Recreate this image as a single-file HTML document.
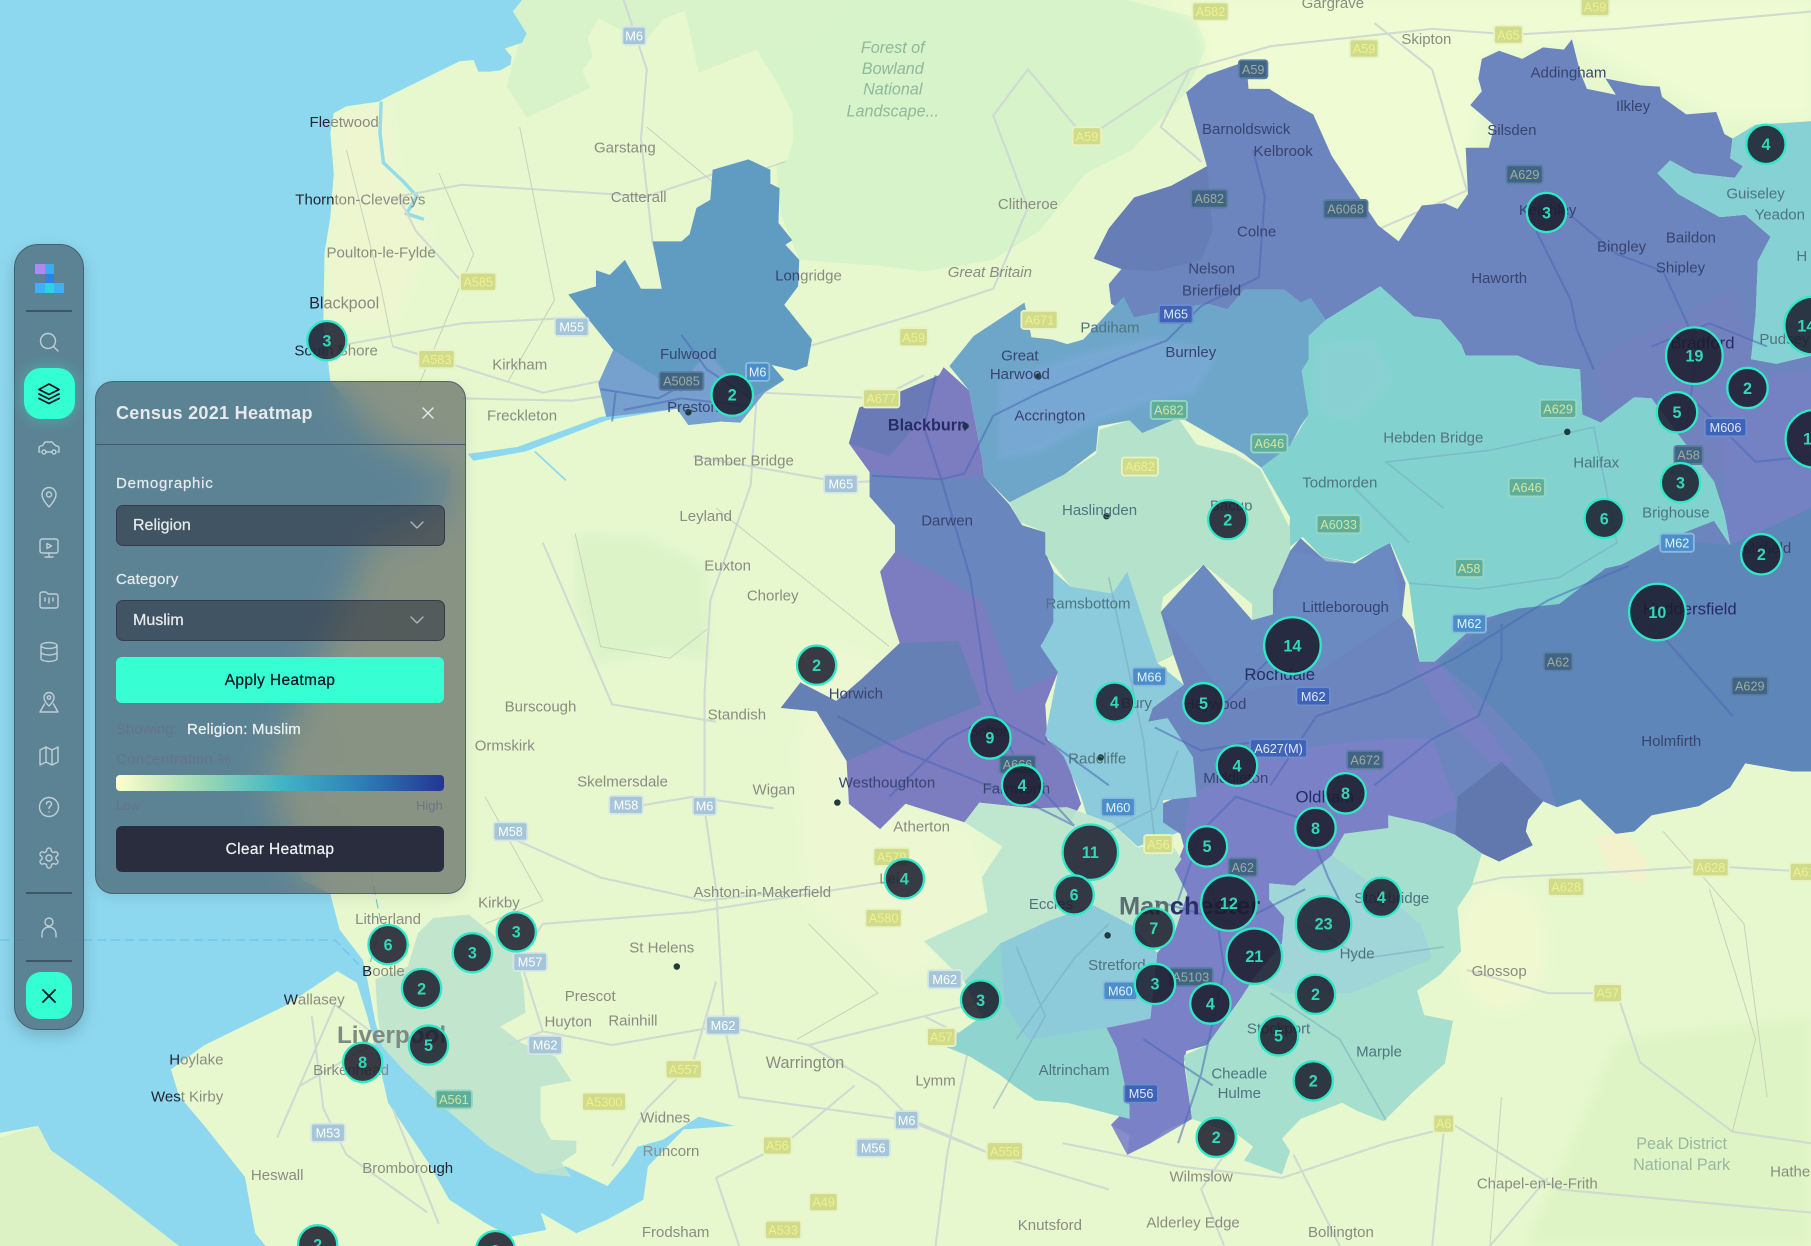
<!DOCTYPE html>
<html><head><meta charset="utf-8"><title>Census 2021 Heatmap</title>
<style>
html,body{margin:0;padding:0;width:1811px;height:1246px;overflow:hidden;background:#e7f8cf;font-family:"Liberation Sans",sans-serif}
#map{position:absolute;left:0;top:0;width:1811px;height:1246px}
#map text{font-family:"Liberation Sans",sans-serif}
.l text,text.l{font-size:13px;fill:#8a8c82;text-anchor:middle}
.h text{font-size:13px;fill:#38446f;text-anchor:middle}
.t text{font-size:13px;fill:#4f7480;text-anchor:middle}
.s rect{stroke-width:1.4;transform:scale(1.12)}
.s text{font-size:11px;text-anchor:middle;font-weight:400}
.a rect{fill:#cfdc8c;stroke:#eaf2c4}.a text{fill:#f3ef8c}
.b rect{fill:#a4c6d8;stroke:#d6e6e6}.b text{fill:#fff}
.c rect{fill:#3f6486;stroke:#5e7da0}.c text{fill:#a0ac98}
.d rect{fill:#5fae9a;stroke:#98d6c4}.d text{fill:#d0e6a0}
.e rect{fill:#4a8fcb;stroke:#8bb9dc}.e text{fill:#e4f2fa}
.f rect{fill:#3f63b8;stroke:#6c8ccc}.f text{fill:#dfe8f8}
.m circle{fill:rgba(27,28,44,.86);stroke:#2fe8c8;stroke-width:2}
.m text{fill:#35d6b8;font-size:14px;font-weight:700;text-anchor:middle}
#side{position:absolute;left:14px;top:244px;width:68px;height:784px;border-radius:24px;border:1px solid #45606f;background:rgba(42,45,58,.5);backdrop-filter:blur(16px);box-shadow:0 6px 16px rgba(0,0,0,.18)}
.dv{position:absolute;left:26px;width:46px;height:2px;background:#3f5667}
.lg{position:absolute;width:9.6px;height:9.6px}
#layers{position:absolute;left:23.5px;top:368px;width:51px;height:51px;border-radius:17px;background:#33ffd2;box-shadow:0 0 16px rgba(51,255,210,.35)}
#closeb{position:absolute;left:26px;top:972px;width:46px;height:47px;border-radius:15px;background:#33ffd2}
#panel{position:absolute;left:95px;top:381px;width:369px;height:511px;border-radius:18px;border:1px solid #4f6272;background:rgba(42,45,58,.5);backdrop-filter:blur(18px);box-shadow:0 4px 14px rgba(0,0,0,.08)}
.tx{position:absolute;white-space:nowrap;line-height:20px;color:#e6eaec;-webkit-text-stroke:.25px currentColor}
.sel{position:absolute;left:116px;width:327px;height:39px;border-radius:7px;border:1px solid #343c4b;background:rgba(42,45,58,.55)}
.btn{position:absolute;left:116px;width:328px;text-align:center;font-size:15.5px;letter-spacing:.35px;border-radius:6px}
#top{position:absolute;left:0;top:0;width:1811px;height:1246px;pointer-events:none}
#top .i{fill:none;stroke:#c0ced5;stroke-width:1.4;stroke-linecap:round;stroke-linejoin:round}
</style></head><body>
<svg id="map" viewBox="0 0 1568 1079" preserveAspectRatio="none" xmlns="http://www.w3.org/2000/svg">
<defs><filter id="bl" x="-20%" y="-20%" width="140%" height="140%"><feGaussianBlur stdDeviation="5"/></filter><filter id="bs" x="-10%" y="-10%" width="120%" height="120%"><feGaussianBlur stdDeviation="2.5"/></filter></defs>
<rect width="1568" height="1079" fill="#e7f8cf"/>
<polygon fill="#d8f2ca" points="449,0 442,9 453,26 443,58 439,75 456,102 511,76 504,61 513,49 509,32 518,16 540,27 555,40 574,17 593,9 605,63 655,43 685,49 720,17 737,14 723,0"/>
<polygon fill="#d6f3ca" points="737,14 720,17 685,49 655,43 673,72 686,98 687,121 682,138 672,142 676,185 692,225 760,230 800,235 860,225 900,200 940,150 980,130 1027,80 1045,40 1035,15 975,0 723,0"/>
<g filter="url(#bl)">
<polygon fill="#effcd3" points="1045,40 1035,15 1000,0 1568,0 1568,100 1490,100 1360,35 1283,51 1270,170 1195,210 1100,80 1045,60"/>
<polygon fill="#dcf3c8" points="498,462 560,465 612,490 614,571 570,565 515,575 498,520"/>
<polygon fill="#edf8d3" points="720,560 770,575 725,695 840,720 860,800 780,850 700,780 690,650"/>
<ellipse cx="1300" cy="820" rx="40" ry="55" fill="#f0f8d0"/>
<polygon fill="#dff4c4" points="1320,1079 1400,900 1568,880 1568,1079"/>
<polygon fill="#eef6d0" points="295,100 335,92 345,160 372,200 340,280 285,277"/>
</g>
<polygon fill="#f4f2cd" points="1380,725 1405,720 1425,745 1425,765 1395,755"/>
<polygon fill="#dcf2c4" points="0,985 33,975 44,996 88,1027 155,1079 0,1079"/>
<polygon fill="#8ed8ef" points="0,0 452,0 444,10 456,29 452,37 437,42 443,49 442,56 433,61 424,62 414,62 410,52 398,53 335,84 328,88 300,92 289,98 286,115 289,150 286,188 281,219 280,277 286,330 329,381 390,407 381,450 320,468 294,537 260,606 232,675 262,762 286,774 294,805 314,831 317,843 325,885 331,906 349,926 380,955 424,993 464,1016 490,1010 526,1027 543,1007 552,993 574,987 605,967 636,975 592,978 561,1010 557,1039 526,1056 499,1068 468,1050 473,1065 442,1071 420,1059 389,1039 371,1007 336,955 327,915 318,880 309,851 292,841 247,871 216,886 177,905 148,926 155,949 177,975 212,1019 221,1068 230,1079 155,1079 88,1027 44,996 33,975 0,981"/>
<polygon fill="#8ed8ef" points="405,393 448,387 520,361 586,354 525,364 455,391 410,399"/>
<path d="M463,391 490,416" fill="none" stroke="#8ed8ef" stroke-width="1.5"/>
<path d="M330,88 329,115 332,141 349,157 361,170 352,185 367,190" fill="none" stroke="#93dcea" stroke-width="3"/>
<path d="M0,814H290L318,843M225,600 300,660M245,680 320,750 330,800 318,843" fill="none" stroke="#6cc4e8" stroke-width="1" stroke-dasharray="8 4"/>
<g fill="none" stroke="#cfdad2" stroke-width="1.8" stroke-linejoin="round">
<path d="M540,0 560,60 555,120 565,210 590,290 612,320 655,345 650,420 615,520 610,600 610,700 620,770 627,887 640,950 785,970 860,1000"/>
<path d="M400,345 495,347 530,342 600,322M600,395 730,418 790,415"/>
<path d="M440,905 470,893 530,905 626,888 700,905 800,880 880,860M470,893 450,830 470,800 600,790 790,760"/>
<path d="M290,300 400,280 500,275M400,244 360,200 345,170 400,160 560,170 620,150M340,300 380,312 470,340 520,330"/>
<path d="M660,340 760,345 800,325M700,300 800,270 860,250 890,180 860,100 890,60 940,120 1030,60 1100,40 1240,25 1310,30 1400,25 1568,10"/>
<path d="M1190,20 1240,60 1260,130 1270,165M1030,60 1005,110 1040,140"/>
<path d="M1270,165 1190,200M430,720 520,760 610,780 700,770M470,470 530,610 620,625M540,700 600,690 670,700"/>
<path d="M240,985 290,870 330,900M270,880 280,960 300,1000 370,1050M330,900 260,940M380,1060 340,960"/>
<path d="M620,850 600,920 560,960 530,1010M700,905 760,940 790,970 860,1000 960,1030M800,880 840,900 820,1000 810,1079"/>
<path d="M640,1079 620,1020 680,990 740,940M920,990 1020,1010 1110,1020 1200,990 1260,975 1350,1030 1568,1050"/>
<path d="M1060,1079 1040,1030 1060,1000M1160,1079 1120,1000M1250,980 1240,1079M1290,1079 1340,1020"/>
<path d="M1255,770 1300,760 1400,755 1480,750 1568,755M1270,840 1340,860 1400,860 1420,920 1500,980 1568,990"/>
</g>
<g fill="none" stroke="#c8d2bc" stroke-width=".9">
<path d="M300,130 330,250 340,300M380,150 410,220 360,340M450,110 480,260 440,330M620,440 720,520 770,560M1480,770 1520,900 1500,980M1300,950 1290,1079M1440,720 1510,800 1530,950M560,110 620,160 680,140M498,462 520,560 580,570 612,545M420,690 470,780 420,800M700,800 760,860 690,900"/>
</g>
<polygon fill="#bce3cd" opacity=".88" points="375,795 406,792 446,825 453,851 455,877 433,889 451,903 481,915 495,936 468,941 468,970 477,987 499,988 499,998 486,1007 495,1019 464,1016 424,993 380,955 349,926 331,906 327,880 325,848 353,837 362,808"/>
<polygon fill="#609cc1" points="617,147 648,138 667,147 667,159 675,163 674,193 686,208 680,212 692,225 691,248 679,264 703,294 699,317 689,321 668,316 679,329 662,340 641,366 624,365 596,368 586,354 525,361 518,332 531,303 492,255 516,248 516,234 528,238 541,225 555,250 573,250 565,209 590,209 597,203 603,180 615,173"/>
<polygon fill="#7da2d2" points="531,303 590,340 600,320 612,305 650,345 679,329 662,340 641,366 624,365 596,368 586,354 525,361 518,332" opacity=".75"/>
<polygon fill="#6c85bf" points="1027,80 1045,65 1079,53 1081,77 1099,77 1115,87 1137,99 1153,135 1175,168 1193,195 1211,209 1231,178 1251,176 1262,181 1271,168 1269,128 1289,128 1294,109 1273,91 1283,79 1280,68 1283,51 1298,44 1318,51 1336,41 1354,43 1361,34 1368,62 1374,77 1399,82 1390,68 1421,74 1437,75 1439,84 1460,99 1486,97 1493,116 1500,120 1498,137 1509,144 1502,154 1466,150 1446,139 1435,150 1453,168 1489,188 1511,186 1533,205 1522,226 1520,274 1516,311 1538,315 1568,308 1568,668 1551,668 1511,661 1498,682 1471,698 1430,706 1415,720 1399,722 1368,692 1348,699 1336,694 1323,710 1321,720 1327,732 1298,746 1283,739 1260,723 1233,713 1202,706 1202,717 1164,722 1153,741 1121,767 1099,765 1099,779 1112,794 1117,810 1110,817 1085,848 1074,865 1052,896 1045,905 1027,910 1025,920 1032,969 1009,979 996,990 976,1000 978,983 962,974 978,958 967,908 958,890 981,886 996,882 1002,825 1017,808 1028,774 1017,753 1025,733 1022,722 1007,713 1004,697 1026,687 1033,690 1025,656 1011,622 994,625 998,613 1025,593 1016,567 1002,574 1005,530 1042,489 1084,537 1102,532 1102,511 1117,477 1126,466 1148,486 1173,488 1203,469 1217,505 1214,533 1223,545 1229,573 1242,573 1260,557 1283,536 1314,527 1350,523 1390,492 1404,489 1448,465 1484,451 1498,472 1493,445 1484,417 1453,376 1430,345 1415,344 1386,366 1370,359 1368,320 1332,316 1314,308 1269,308 1265,298 1247,277 1224,274 1195,248 1148,277 1126,262 1112,251 1077,251 1063,268 1045,263 1007,270 982,275 962,263 960,246 971,233 947,224 960,198 982,171 1014,161 1045,144"/>
<polygon fill="#667db6" points="982,171 1014,161 1045,144 1050,200 1040,225 1000,235 971,233 947,224 960,198"/>
<polygon fill="#7680c0" opacity=".6" points="1420,290 1500,250 1518,300 1516,311 1500,400 1484,417 1453,376 1430,345 1415,344 1390,350 1380,320 1400,300"/>
<polygon fill="#7a80c6" opacity=".6" points="1490,330 1568,320 1568,460 1510,490 1498,472 1493,445"/>
<polygon fill="#5f86b8" points="1245,573 1300,530 1390,495 1450,468 1498,472 1568,440 1568,668 1551,668 1511,661 1498,682 1471,698 1430,706 1415,720 1399,722 1368,692 1348,699 1336,660 1290,610"/>
<polygon fill="#7c81c8" opacity=".9" points="1030,690 1100,650 1200,640 1240,640 1262,700 1233,713 1202,706 1202,717 1164,722 1153,741 1121,767 1099,765 1099,779 1112,794 1117,810 1085,848 1052,896 1027,910 1025,920 1032,969 996,990 976,1000 962,974 978,958 958,890 996,882 1002,825 1017,808 1028,774 1017,753 1025,733"/>
<polygon fill="#7e7fc4" opacity=".7" points="1224,575 1245,573 1310,660 1290,660 1250,620"/>
<polygon fill="#6178ae" points="1262,690 1300,660 1336,694 1323,710 1321,720 1327,732 1298,746 1283,739 1260,723"/>
<polygon fill="#6b8dc4" opacity=".6" points="1042,489 1084,537 1102,532 1117,477 1173,488 1203,469 1214,533 1130,590 1060,600 1005,530"/>
<polygon fill="#82d3d0" points="1148,277 1195,248 1224,274 1247,277 1265,298 1269,308 1314,308 1332,316 1368,320 1370,359 1386,366 1415,344 1430,345 1453,376 1484,417 1493,445 1498,472 1484,451 1448,465 1404,489 1390,492 1350,523 1314,527 1283,536 1260,557 1242,573 1229,573 1224,537 1220,506 1204,470 1171,487 1144,482 1128,465 1115,475 1117,448 1092,405 1117,386 1133,359 1127,321 1133,291"/>
<polygon fill="#8fcfd6" opacity=".6" filter="url(#bs)" points="1140,300 1190,295 1205,330 1170,365 1138,355"/>
<polygon fill="#85d1d4" points="1500,120 1498,137 1509,144 1502,154 1466,150 1446,139 1435,150 1453,168 1489,188 1511,186 1533,205 1522,226 1520,274 1516,311 1538,315 1568,308 1568,105 1520,108"/>
<polygon fill="#6ea6ca" points="822,317 843,291 887,262 893,292 911,294 924,298 938,294 960,270 973,257 982,275 1007,270 1045,263 1063,268 1077,251 1112,251 1126,262 1135,258 1148,277 1133,291 1133,311 1127,321 1133,359 1126,369 1117,386 1092,405 1077,393 1023,362 1000,376 987,376 978,364 951,369 949,390 911,419 874,435 852,413 850,396 839,338"/>
<polygon fill="#7baad7" opacity=".7" filter="url(#bs)" points="865,330 940,305 1000,292 1055,305 1035,340 990,350 950,365 900,392 865,398"/>
<polygon fill="#7c7cc0" points="817,318 839,338 850,396 852,413 874,437 885,455 905,461 907,483 919,511 910,548 901,559 916,582 905,610 907,641 923,656 936,696 927,712 894,700 848,695 835,712 784,696 762,718 735,696 733,659 707,616 676,613 693,591 724,607 746,588 779,557 771,532 762,495 775,478 775,455 753,430 753,409 735,384 744,353 775,341 813,325"/>
<polygon fill="#6a86be" points="753,430 753,409 800,415 852,413 874,437 885,455 905,461 907,483 919,511 910,548 901,559 916,582 880,600 850,520 800,490 775,478 775,455"/>
<polygon fill="#6580b4" points="779,557 830,555 850,610 800,630 733,659 707,616 676,613 693,591 724,607 746,588"/>
<polygon fill="#6a7ab6" points="744,353 775,341 813,325 800,360 770,395 735,384"/>
<polygon fill="#b5e2cb" points="874,435 923,410 949,393 952,372 978,364 989,375 1020,362 1036,385 1069,393 1091,406 1117,458 1117,477 1102,511 1102,532 1084,537 1084,523 1062,505 1042,489 1007,517 1005,530 1016,567 1002,574 976,495 963,514 927,508 905,480 905,461 883,452"/>
<polygon fill="#8bcbdc" points="912,495 927,508 963,514 976,495 1002,574 1025,593 998,613 994,625 1011,622 1033,656 1036,690 1007,693 1007,712 1020,721 985,733 963,713 941,706 936,690 921,655 905,637 916,582 901,560 912,539"/>
<polygon fill="#bde6d0" opacity=".95" points="848,695 835,712 868,733 850,760 855,790 800,815 835,850 866,817 909,797 947,784 981,802 1002,820 1017,808 1028,774 1017,753 1023,744 1014,730 985,734 963,713 924,699 894,700"/>
<polygon fill="#8fd4cf" points="866,817 909,797 947,784 981,802 1002,825 996,882 958,890 967,908 978,958 978,969 924,955 897,953 879,941 866,931 840,915 815,905 850,880 835,850"/>
<polygon fill="#8dc8dc" opacity=".8" points="866,817 909,797 947,784 981,802 1002,825 996,882 958,890 890,900 870,870"/>
<polygon fill="#a6dfcd" points="1153,741 1164,722 1202,717 1202,706 1233,713 1260,723 1283,739 1274,768 1262,786 1265,824 1247,844 1227,858 1233,879 1258,884 1251,921 1224,945 1198,971 1175,962 1162,955 1126,969 1110,986 1117,997 1110,1017 1077,1005 1085,993 1072,983 1032,969 1025,914 1045,905 1074,865 1085,848 1110,817 1112,794 1099,779 1099,765 1121,767"/>
<polygon fill="#a0d6d8" points="1099,765 1121,767 1153,741 1180,760 1230,800 1240,830 1170,860 1110,860 1085,848 1110,817 1112,794 1099,779"/>
<g fill="none" stroke="#4b68b6" stroke-width="1.8" opacity=".55" stroke-linejoin="round">
<path d="M590,290 612,320 650,345M520,337 570,345 605,326M533,340 530,365M540,355 590,345 650,352"/>
<path d="M755,412 815,415 835,410 860,360 900,340 970,310 1010,295M810,325 800,370 815,415 840,500 855,600 880,660 930,715"/>
<path d="M725,620 780,650 880,690 930,715M770,690 820,640 860,620 905,645M905,640 960,680"/>
<path d="M1085,130 1095,170 1090,240 1040,265 1010,295M1330,200 1360,260 1365,285 1380,320M1340,170 1400,220 1440,235 1470,300 1460,370"/>
<path d="M1100,680 1140,620 1200,600 1260,570 1340,520 1410,490M1060,610 1100,570M1190,680 1240,640 1280,620 1300,570 1300,540M1430,540 1500,620"/>
<path d="M1000,630 1040,650 1100,640M1020,780 1040,720 1070,690 1130,710 1150,760 1165,790M1050,770 1060,840 1040,930 1020,990M990,900 1050,940M1000,780 1070,800 1130,770"/>
<path d="M1430,300 1480,280 1530,300M1470,350 1520,400 1568,395"/>
</g>
<g fill="none" stroke="#76a6c0" stroke-width="1.4" opacity=".5">
<path d="M960,500 990,640 1000,730M1020,650 1000,700 960,720M880,820 905,880 860,960M960,800 930,830 880,900M1170,420 1220,470M1250,440 1200,400 1290,390 1380,370 1400,470 1350,500 1280,510 1220,505M1130,800 1180,830 1250,820M1100,860 1160,900 1200,970"/>
</g>
<g fill="#1f3b3b"><circle cx="596" cy="357" r="2.8"/><circle cx="836" cy="369" r="2.8"/><circle cx="899" cy="326" r="2.8"/><circle cx="958" cy="447" r="2.8"/><circle cx="1357" cy="374" r="2.8"/><circle cx="953" cy="656" r="2.8"/><circle cx="725" cy="695" r="2.8"/><circle cx="586" cy="837" r="2.8"/><circle cx="959" cy="810" r="2.8"/></g>
<g class="l">
<text x="298" y="110"><tspan fill="#23252f">Fle</tspan>etwood</text><text x="312" y="177"><tspan fill="#23252f">Thorn</tspan>ton-Cleveleys</text><text x="330" y="223">Poulton-le-Fylde</text><text x="298" y="267" style="font-size:14px"><tspan fill="#23252f">Bl</tspan>ackpool</text><text x="291" y="308"><tspan fill="#23252f">So</tspan>uth Shore</text>
<text x="541" y="132">Garstang</text><text x="553" y="175">Catterall</text><text x="450" y="320">Kirkham</text><text x="452" y="364">Freckleton</text><text x="700" y="243"><tspan fill="#38446f">Lon</tspan>gridge</text><text x="890" y="181">Clitheroe</text><text x="857" y="240" font-style="italic">Great Britain</text>
<text x="644" y="403">Bamber Bridge</text><text x="611" y="451">Leyland</text><text x="630" y="494">Euxton</text><text x="669" y="520">Chorley</text><text x="638" y="623">Standish</text><text x="468" y="616">Burscough</text><text x="437" y="650">Ormskirk</text><text x="539" y="681">Skelmersdale</text><text x="670" y="688">Wigan</text><text x="432" y="786">Kirkby</text><text x="336" y="800">Litherland</text><text x="332" y="845"><tspan fill="#23252f">B</tspan>ootle</text><text x="272" y="870"><tspan fill="#23252f">W</tspan>allasey</text><text x="304" y="931">Birkenhead</text><text x="170" y="922"><tspan fill="#23252f">H</tspan>oylake</text><text x="162" y="954"><tspan fill="#23252f">Wes</tspan>t Kirby</text><text x="240" y="1022">Heswall</text><text x="353" y="1016">Bromboro<tspan fill="#23252f">ugh</tspan></text><text x="511" y="867">Prescot</text><text x="492" y="889">Huyton</text><text x="548" y="888">Rainhill</text><text x="573" y="825">St Helens</text><text x="660" y="777">Ashton-in-Makerfield</text><text x="697" y="925" style="font-size:14px">Warrington</text><text x="576" y="972">Widnes</text><text x="581" y="1001">Runcorn</text><text x="585" y="1071">Frodsham</text><text x="810" y="940">Lymm</text><text x="909" y="1065">Knutsford</text><text x="1033" y="1063">Alderley Edge</text><text x="1161" y="1071">Bollington</text><text x="1040" y="1023">Wilmslow</text><text x="1331" y="1029">Chapel-en-le-Frith</text><text x="1550" y="1019">Hathe</text><text x="1298" y="845">Glossop</text><text x="798" y="720">Atherton</text><text x="770" y="765">Lei</text><text x="1235" y="38">Skipton</text><text x="1154" y="7">Gargrave</text>
<text x="1456" y="995" style="font-size:14px;fill:#98b8a4">Peak District</text><text x="1456" y="1013" style="font-size:14px;fill:#98b8a4">National Park</text>
<g font-style="italic"><text x="773" y="46" style="fill:#90b89c;font-size:14px">Forest of</text><text x="773" y="64" style="fill:#90b89c;font-size:14px">Bowland</text><text x="773" y="82" style="fill:#90b89c;font-size:14px">National</text><text x="773" y="101" style="fill:#90b89c;font-size:14px">Landscape...</text></g>
</g>
<g class="t"><text x="1194" y="915">Marple</text><text x="1073" y="934">Cheadle</text><text x="1073" y="951">Hulme</text><text x="1107" y="895">Stockport</text><text x="930" y="931">Altrincham</text><text x="967" y="840">Stretford</text><text x="910" y="787">Eccles</text><text x="1175" y="830">Hyde</text><text x="1205" y="782">Stalybridge</text><text x="950" y="661">Radcliffe</text><text x="984" y="613">Bury</text><text x="942" y="527">Ramsbottom</text><text x="952" y="446">Haslingden</text><text x="1066" y="442">Bacup</text><text x="1160" y="422">Todmorden</text><text x="1241" y="383">Hebden Bridge</text><text x="1382" y="405">Halifax</text><text x="1451" y="448">Brighouse</text><text x="1520" y="172">Guiseley</text><text x="1541" y="190">Yeadon</text><text x="1545" y="298">Pudsey</text><text x="1560" y="226">H</text><text x="961" y="288">Padiham</text></g>
<g class="h"><text x="596" y="311">Fulwood</text><text x="600" y="357">Preston</text><text x="883" y="312">Great</text><text x="883" y="328">Harwood</text><text x="909" y="364">Accrington</text><text x="1031" y="309">Burnley</text><text x="820" y="455">Darwen</text><text x="741" y="605">Horwich</text><text x="768" y="682">Westhoughton</text><text x="880" y="687">Farnworth</text><text x="857" y="638">Bolton</text><text x="1052" y="614">Heywood</text><text x="1070" y="678">Middleton</text><text x="1165" y="530">Littleborough</text><text x="1447" y="646">Holmfirth</text><text x="1298" y="245">Haworth</text><text x="1404" y="218">Bingley</text><text x="1464" y="210">Baildon</text><text x="1455" y="236">Shipley</text><text x="1340" y="186">Keighley</text><text x="1309" y="117">Silsden</text><text x="1358" y="67">Addingham</text><text x="1414" y="96">Ilkley</text><text x="1079" y="116">Barnoldswick</text><text x="1111" y="135">Kelbrook</text><text x="1088" y="205">Colne</text><text x="1049" y="237">Nelson</text><text x="1049" y="256">Brierfield</text><text x="1530" y="479">Mirfield</text>
<text x="803" y="373" style="font-size:14px;font-weight:700;fill:#262c66">Blackburn</text><text x="1108" y="589" style="font-size:14.5px;fill:#262f60">Rochdale</text><text x="1147" y="695" style="font-size:14.5px;fill:#262c66">Oldham</text><text x="1463" y="532" style="font-size:14.5px;fill:#262c66">Huddersfield</text><text x="1474" y="302" style="font-size:14.5px;fill:#262c66">Bradford</text></g>
<text x="339" y="903" style="font-size:21px;font-weight:700;fill:#7d8a82" text-anchor="middle">Liverpool</text>
<text x="1030" y="792" style="font-size:22px;font-weight:700;fill:#5a6d70" text-anchor="middle">Man<tspan fill="#2b3068">chester</tspan></text>
<g class="s">
<g class="a" transform="translate(1048,10)"><rect x="-14" y="-7" width="28" height="14" rx="2"/><text y="4">A582</text></g>
<g class="a" transform="translate(1181,42)"><rect x="-11" y="-7" width="22" height="14" rx="2"/><text y="4">A59</text></g>
<g class="a" transform="translate(1306,30)"><rect x="-11" y="-7" width="22" height="14" rx="2"/><text y="4">A65</text></g>
<g class="a" transform="translate(1381,6)"><rect x="-11" y="-7" width="22" height="14" rx="2"/><text y="4">A59</text></g>
<g class="b" transform="translate(549,31)"><rect x="-9" y="-7" width="18" height="14" rx="2"/><text y="4">M6</text></g>
<g class="a" transform="translate(941,118)"><rect x="-11" y="-7" width="22" height="14" rx="2"/><text y="4">A59</text></g>
<g class="c" transform="translate(1085,60)"><rect x="-11" y="-7" width="22" height="14" rx="2"/><text y="4">A59</text></g>
<g class="c" transform="translate(1047,172)"><rect x="-14" y="-7" width="28" height="14" rx="2"/><text y="4">A682</text></g>
<g class="c" transform="translate(1165,181)"><rect x="-17" y="-7" width="34" height="14" rx="2"/><text y="4">A6068</text></g>
<g class="a" transform="translate(791,292)"><rect x="-11" y="-7" width="22" height="14" rx="2"/><text y="4">A59</text></g>
<g class="a" transform="translate(900,277)"><rect x="-14" y="-7" width="28" height="14" rx="2"/><text y="4">A671</text></g>
<g class="b" transform="translate(495,283)"><rect x="-13" y="-7" width="26" height="14" rx="2"/><text y="4">M55</text></g>
<g class="a" transform="translate(414,244)"><rect x="-14" y="-7" width="28" height="14" rx="2"/><text y="4">A585</text></g>
<g class="a" transform="translate(378,311)"><rect x="-14" y="-7" width="28" height="14" rx="2"/><text y="4">A583</text></g>
<g class="c" transform="translate(590,330)"><rect x="-17" y="-7" width="34" height="14" rx="2"/><text y="4">A5085</text></g>
<g class="e" transform="translate(656,322)"><rect x="-9" y="-7" width="18" height="14" rx="2"/><text y="4">M6</text></g>
<g class="a" transform="translate(763,345)"><rect x="-14" y="-7" width="28" height="14" rx="2"/><text y="4">A677</text></g>
<g class="f" transform="translate(1018,272)"><rect x="-13" y="-7" width="26" height="14" rx="2"/><text y="4">M65</text></g>
<g class="c" transform="translate(1320,151)"><rect x="-14" y="-7" width="28" height="14" rx="2"/><text y="4">A629</text></g>
<g class="d" transform="translate(1012,355)"><rect x="-14" y="-7" width="28" height="14" rx="2"/><text y="4">A682</text></g>
<g class="d" transform="translate(1099,384)"><rect x="-14" y="-7" width="28" height="14" rx="2"/><text y="4">A646</text></g>
<g class="a" transform="translate(987,404)"><rect x="-14" y="-7" width="28" height="14" rx="2"/><text y="4">A682</text></g>
<g class="d" transform="translate(1349,354)"><rect x="-14" y="-7" width="28" height="14" rx="2"/><text y="4">A629</text></g>
<g class="d" transform="translate(1322,422)"><rect x="-14" y="-7" width="28" height="14" rx="2"/><text y="4">A646</text></g>
<g class="d" transform="translate(1159,454)"><rect x="-17" y="-7" width="34" height="14" rx="2"/><text y="4">A6033</text></g>
<g class="b" transform="translate(728,419)"><rect x="-13" y="-7" width="26" height="14" rx="2"/><text y="4">M65</text></g>
<g class="d" transform="translate(1272,492)"><rect x="-11" y="-7" width="22" height="14" rx="2"/><text y="4">A58</text></g>
<g class="e" transform="translate(1272,540)"><rect x="-13" y="-7" width="26" height="14" rx="2"/><text y="4">M62</text></g>
<g class="c" transform="translate(1349,573)"><rect x="-11" y="-7" width="22" height="14" rx="2"/><text y="4">A62</text></g>
<g class="c" transform="translate(1515,594)"><rect x="-14" y="-7" width="28" height="14" rx="2"/><text y="4">A629</text></g>
<g class="e" transform="translate(1452,470)"><rect x="-13" y="-7" width="26" height="14" rx="2"/><text y="4">M62</text></g>
<g class="f" transform="translate(1494,370)"><rect x="-16" y="-7" width="32" height="14" rx="2"/><text y="4">M606</text></g>
<g class="c" transform="translate(1462,394)"><rect x="-11" y="-7" width="22" height="14" rx="2"/><text y="4">A58</text></g>
<g class="e" transform="translate(995,586)"><rect x="-13" y="-7" width="26" height="14" rx="2"/><text y="4">M66</text></g>
<g class="f" transform="translate(1137,603)"><rect x="-13" y="-7" width="26" height="14" rx="2"/><text y="4">M62</text></g>
<g class="f" transform="translate(1107,648)"><rect x="-22" y="-7" width="44" height="14" rx="2"/><text y="4">A627(M)</text></g>
<g class="c" transform="translate(1182,658)"><rect x="-14" y="-7" width="28" height="14" rx="2"/><text y="4">A672</text></g>
<g class="b" transform="translate(542,697)"><rect x="-13" y="-7" width="26" height="14" rx="2"/><text y="4">M58</text></g>
<g class="b" transform="translate(442,720)"><rect x="-13" y="-7" width="26" height="14" rx="2"/><text y="4">M58</text></g>
<g class="b" transform="translate(610,698)"><rect x="-9" y="-7" width="18" height="14" rx="2"/><text y="4">M6</text></g>
<g class="c" transform="translate(881,662)"><rect x="-14" y="-7" width="28" height="14" rx="2"/><text y="4">A666</text></g>
<g class="e" transform="translate(968,699)"><rect x="-13" y="-7" width="26" height="14" rx="2"/><text y="4">M60</text></g>
<g class="a" transform="translate(772,742)"><rect x="-14" y="-7" width="28" height="14" rx="2"/><text y="4">A579</text></g>
<g class="a" transform="translate(765,795)"><rect x="-14" y="-7" width="28" height="14" rx="2"/><text y="4">A580</text></g>
<g class="a" transform="translate(1003,731)"><rect x="-11" y="-7" width="22" height="14" rx="2"/><text y="4">A56</text></g>
<g class="c" transform="translate(1076,751)"><rect x="-11" y="-7" width="22" height="14" rx="2"/><text y="4">A62</text></g>
<g class="c" transform="translate(1031,846)"><rect x="-17" y="-7" width="34" height="14" rx="2"/><text y="4">A5103</text></g>
<g class="e" transform="translate(970,858)"><rect x="-13" y="-7" width="26" height="14" rx="2"/><text y="4">M60</text></g>
<g class="b" transform="translate(818,848)"><rect x="-13" y="-7" width="26" height="14" rx="2"/><text y="4">M62</text></g>
<g class="a" transform="translate(815,898)"><rect x="-11" y="-7" width="22" height="14" rx="2"/><text y="4">A57</text></g>
<g class="b" transform="translate(459,833)"><rect x="-13" y="-7" width="26" height="14" rx="2"/><text y="4">M57</text></g>
<g class="b" transform="translate(626,888)"><rect x="-13" y="-7" width="26" height="14" rx="2"/><text y="4">M62</text></g>
<g class="b" transform="translate(472,905)"><rect x="-13" y="-7" width="26" height="14" rx="2"/><text y="4">M62</text></g>
<g class="d" transform="translate(393,952)"><rect x="-14" y="-7" width="28" height="14" rx="2"/><text y="4">A561</text></g>
<g class="a" transform="translate(523,954)"><rect x="-17" y="-7" width="34" height="14" rx="2"/><text y="4">A5300</text></g>
<g class="a" transform="translate(592,926)"><rect x="-14" y="-7" width="28" height="14" rx="2"/><text y="4">A557</text></g>
<g class="a" transform="translate(673,992)"><rect x="-11" y="-7" width="22" height="14" rx="2"/><text y="4">A56</text></g>
<g class="b" transform="translate(284,981)"><rect x="-13" y="-7" width="26" height="14" rx="2"/><text y="4">M53</text></g>
<g class="b" transform="translate(785,970)"><rect x="-9" y="-7" width="18" height="14" rx="2"/><text y="4">M6</text></g>
<g class="b" transform="translate(756,994)"><rect x="-13" y="-7" width="26" height="14" rx="2"/><text y="4">M56</text></g>
<g class="a" transform="translate(870,997)"><rect x="-14" y="-7" width="28" height="14" rx="2"/><text y="4">A556</text></g>
<g class="a" transform="translate(713,1041)"><rect x="-11" y="-7" width="22" height="14" rx="2"/><text y="4">A49</text></g>
<g class="a" transform="translate(678,1065)"><rect x="-14" y="-7" width="28" height="14" rx="2"/><text y="4">A533</text></g>
<g class="f" transform="translate(988,947)"><rect x="-13" y="-7" width="26" height="14" rx="2"/><text y="4">M56</text></g>
<g class="a" transform="translate(1392,860)"><rect x="-11" y="-7" width="22" height="14" rx="2"/><text y="4">A57</text></g>
<g class="a" transform="translate(1356,768)"><rect x="-14" y="-7" width="28" height="14" rx="2"/><text y="4">A628</text></g>
<g class="a" transform="translate(1481,751)"><rect x="-14" y="-7" width="28" height="14" rx="2"/><text y="4">A628</text></g>
<g class="a" transform="translate(1562,755)"><rect x="-11" y="-7" width="22" height="14" rx="2"/><text y="4">A61</text></g>
<g class="a" transform="translate(1250,973)"><rect x="-8" y="-7" width="16" height="14" rx="2"/><text y="4">A6</text></g>
</g>
<g class="m">
<g transform="translate(283,295)"><circle r="17"/><text y="5">3</text></g>
<g transform="translate(634,342)"><circle r="18"/><text y="5">2</text></g>
<g transform="translate(1529,125)"><circle r="17"/><text y="5">4</text></g>
<g transform="translate(1339,184)"><circle r="17"/><text y="5">3</text></g>
<g transform="translate(1570,282)"><circle r="25"/><text x="-6" y="5">14</text></g>
<g transform="translate(1467,308)"><circle r="24.5"/><text y="5">19</text></g>
<g transform="translate(1513,336)"><circle r="17.5"/><text y="5">2</text></g>
<g transform="translate(1452,357)"><circle r="17.5"/><text y="5">5</text></g>
<g transform="translate(1571,380)"><circle r="25"/><text x="-6" y="5">1</text></g>
<g transform="translate(1455,418)"><circle r="17"/><text y="5">3</text></g>
<g transform="translate(1389,449)"><circle r="17"/><text y="5">6</text></g>
<g transform="translate(1525,480)"><circle r="17.5"/><text y="5">2</text></g>
<g transform="translate(1063,450)"><circle r="17"/><text y="5">2</text></g>
<g transform="translate(1435,530)"><circle r="24.5"/><text y="5">10</text></g>
<g transform="translate(1119,559)"><circle r="24.5"/><text y="5">14</text></g>
<g transform="translate(707,576)"><circle r="17"/><text y="5">2</text></g>
<g transform="translate(965,608)"><circle r="17"/><text y="5">4</text></g>
<g transform="translate(1042,609)"><circle r="17.5"/><text y="5">5</text></g>
<g transform="translate(857,639)"><circle r="18"/><text y="5">9</text></g>
<g transform="translate(885,680)"><circle r="17.5"/><text y="5">4</text></g>
<g transform="translate(1071,663)"><circle r="17.5"/><text y="5">4</text></g>
<g transform="translate(1165,687)"><circle r="17.5"/><text y="5">8</text></g>
<g transform="translate(1139,717)"><circle r="17.5"/><text y="5">8</text></g>
<g transform="translate(1045,733)"><circle r="17.5"/><text y="5">5</text></g>
<g transform="translate(944,738)"><circle r="24"/><text y="5">11</text></g>
<g transform="translate(783,761)"><circle r="17"/><text y="5">4</text></g>
<g transform="translate(930,775)"><circle r="17"/><text y="5">6</text></g>
<g transform="translate(1064,782)"><circle r="24"/><text y="5">12</text></g>
<g transform="translate(999,804)"><circle r="17.5"/><text y="5">7</text></g>
<g transform="translate(1146,800)"><circle r="24"/><text y="5">23</text></g>
<g transform="translate(1196,777)"><circle r="17"/><text y="5">4</text></g>
<g transform="translate(1086,828)"><circle r="24"/><text y="5">21</text></g>
<g transform="translate(1000,852)"><circle r="17.5"/><text y="5">3</text></g>
<g transform="translate(1048,869)"><circle r="17.5"/><text y="5">4</text></g>
<g transform="translate(1139,861)"><circle r="17"/><text y="5">2</text></g>
<g transform="translate(849,866)"><circle r="17"/><text y="5">3</text></g>
<g transform="translate(1107,897)"><circle r="17"/><text y="5">5</text></g>
<g transform="translate(1137,936)"><circle r="17"/><text y="5">2</text></g>
<g transform="translate(1053,985)"><circle r="17"/><text y="5">2</text></g>
<g transform="translate(336,818)"><circle r="17"/><text y="5">6</text></g>
<g transform="translate(409,825)"><circle r="17"/><text y="5">3</text></g>
<g transform="translate(447,807)"><circle r="17"/><text y="5">3</text></g>
<g transform="translate(365,856)"><circle r="17"/><text y="5">2</text></g>
<g transform="translate(371,905)"><circle r="17"/><text y="5">5</text></g>
<g transform="translate(314,920)"><circle r="17"/><text y="5">8</text></g>
<g transform="translate(275,1078)"><circle r="17"/><text y="5">2</text></g>
<g transform="translate(429,1083)"><circle r="17"/><text y="5">3</text></g>
</g>
</svg>

<div id="side"></div>
<div class="lg" style="left:35px;top:264px;background:#b088f0"></div>
<div class="lg" style="left:44.5px;top:264px;background:#3fa9f5"></div>
<div class="lg" style="left:44.5px;top:273.5px;background:#2f7fe8"></div>
<div class="lg" style="left:35px;top:283px;background:#3fb0f5"></div>
<div class="lg" style="left:44.5px;top:283px;background:#2cd3e0"></div>
<div class="lg" style="left:54px;top:283px;background:#3fb0f5"></div>
<div class="dv" style="top:310px"></div>
<div class="dv" style="top:892px"></div>
<div class="dv" style="top:960px"></div>
<div id="layers"></div>
<div id="closeb"></div>

<div id="panel"></div>
<div class="tx" style="left:116px;top:403px;font-size:18px;font-weight:700;letter-spacing:.3px;-webkit-text-stroke:0">Census 2021 Heatmap</div>
<div style="position:absolute;left:96px;top:444px;width:369px;height:1px;background:#46586a"></div>
<div class="tx" style="left:116px;top:474px;font-size:15px;letter-spacing:.75px">Demographic</div>
<div class="sel" style="top:505px"></div>
<div class="tx" style="left:133px;top:516px;font-size:16px">Religion</div>
<div class="tx" style="left:116px;top:570px;font-size:15px;letter-spacing:.2px">Category</div>
<div class="sel" style="top:600px"></div>
<div class="tx" style="left:133px;top:611px;font-size:16px">Muslim</div>
<div class="btn" style="top:657px;height:46px;line-height:47px;background:#37ffd3;color:#0c1220;-webkit-text-stroke:.25px #0c1220">Apply Heatmap</div>
<div class="tx" style="left:116px;top:720px;font-size:15px;color:#66738a;-webkit-text-stroke:0">Showing:</div>
<div class="tx" style="left:187px;top:720px;font-size:15px;letter-spacing:.25px;color:#eef1f2">Religion: Muslim</div>
<div class="tx" style="left:116px;top:750px;font-size:15px;color:#66738a;-webkit-text-stroke:0;letter-spacing:.3px">Concentration %</div>
<div style="position:absolute;left:116px;top:775px;width:328px;height:16px;border-radius:4px;background:linear-gradient(90deg,#ffffcc,#a1dab4 25%,#41b6c4 50%,#2c7fb8 75%,#253494)"></div>
<div class="tx" style="left:116px;top:796px;font-size:13px;color:#66738a;-webkit-text-stroke:0">Low</div>
<div class="tx" style="left:416px;top:796px;font-size:13px;color:#6c7488;-webkit-text-stroke:0">High</div>
<div class="btn" style="top:826px;height:46px;line-height:47px;background:#2a2d3d;color:#eef0f2;-webkit-text-stroke:.25px #eef0f2">Clear Heatmap</div>

<svg id="top" viewBox="0 0 1811 1246" xmlns="http://www.w3.org/2000/svg">
<g class="i">
<g transform="translate(37,330)"><circle cx="11" cy="11" r="7.5"/><path d="M21 21l-4.5-4.5"/></g>
<g transform="translate(37,435)"><path d="M3 17H2v-4c0-1 .7-1.8 1.6-2l2-.4L8 7h7l3.5 3.6 2.2.6c.8.2 1.3 1 1.3 1.8v4h-1"/><circle cx="7" cy="17" r="2"/><circle cx="17" cy="17" r="2"/><path d="M9 17h6"/></g>
<g transform="translate(37,485)"><path d="M12 22s7-7 7-12.5A7 7 0 0 0 5 9.5C5 15 12 22 12 22z"/><circle cx="12" cy="9.5" r="2.5"/></g>
<g transform="translate(37,536)"><rect x="3" y="3" width="18" height="14" rx="2"/><path d="M10 7.5l4.5 2.5-4.5 2.5zM12 17v4M8 21h8"/></g>
<g transform="translate(37,588)"><path d="M3 6a2 2 0 0 1 2-2h4l2 2h8a2 2 0 0 1 2 2v10a2 2 0 0 1-2 2H5a2 2 0 0 1-2-2zM8 10v3M12 10v5M16 10v3"/></g>
<g transform="translate(37,640)"><ellipse cx="12" cy="5.5" rx="8" ry="3"/><path d="M4 5.5v13c0 1.7 3.6 3 8 3s8-1.3 8-3v-13M4 12c0 1.7 3.6 3 8 3s8-1.3 8-3"/></g>
<g transform="translate(37,691)"><path d="M12 15s5-4.5 5-8.5a5 5 0 0 0-10 0c0 4 5 8.5 5 8.5z"/><circle cx="12" cy="6.5" r="1.7"/><path d="M7.5 13 3 21h18l-4.5-8"/></g>
<g transform="translate(37,744)"><path d="M3 6l6-3 6 3 6-3v15l-6 3-6-3-6 3zM9 3v15M15 6v15"/></g>
<g transform="translate(37,795)"><circle cx="12" cy="12" r="9.5"/><path d="M9.5 9a2.5 2.5 0 1 1 4 2c-1 .7-1.5 1.2-1.5 2.5M12 17h.01"/></g>
<g transform="translate(37,846)"><path d="M12.22 2h-.44a2 2 0 0 0-2 2v.18a2 2 0 0 1-1 1.73l-.43.25a2 2 0 0 1-2 0l-.15-.08a2 2 0 0 0-2.73.73l-.22.38a2 2 0 0 0 .73 2.73l.15.1a2 2 0 0 1 1 1.72v.51a2 2 0 0 1-1 1.74l-.15.09a2 2 0 0 0-.73 2.73l.22.38a2 2 0 0 0 2.73.73l.15-.08a2 2 0 0 1 2 0l.43.25a2 2 0 0 1 1 1.73V20a2 2 0 0 0 2 2h.44a2 2 0 0 0 2-2v-.18a2 2 0 0 1 1-1.73l.43-.25a2 2 0 0 1 2 0l.15.08a2 2 0 0 0 2.73-.73l.22-.39a2 2 0 0 0-.73-2.73l-.15-.08a2 2 0 0 1-1-1.74v-.5a2 2 0 0 1 1-1.74l.15-.09a2 2 0 0 0 .73-2.73l-.22-.38a2 2 0 0 0-2.73-.73l-.15.08a2 2 0 0 1-2 0l-.43-.25a2 2 0 0 1-1-1.73V4a2 2 0 0 0-2-2z"/><circle cx="12" cy="12" r="3"/></g>
<g transform="translate(37,915)"><circle cx="12" cy="7" r="4"/><path d="M5 22v-3a7 7 0 0 1 14 0v3"/></g>
</g>
<g fill="none" stroke="#0c1220" stroke-width="1.8" stroke-linecap="round" stroke-linejoin="round">
<g transform="translate(37,382)"><path d="M12 2 2 7.5l10 5 10-5zM2 12l10 5 10-5M2 16.5l10 5 10-5"/></g>
<g transform="translate(37,984)"><path d="M6 6l12 12M18 6 6 18"/></g>
</g>
<g fill="none" stroke="#e2e6e8" stroke-width="1.5" stroke-linecap="round"><path d="M423 408l10 10M433 408l-10 10"/></g>
<g fill="none" stroke="#aeb6bc" stroke-width="1.4" stroke-linecap="round" stroke-linejoin="round"><path d="M411 522l6 6 6-6M411 617l6 6 6-6"/></g>
</svg>
</body></html>
